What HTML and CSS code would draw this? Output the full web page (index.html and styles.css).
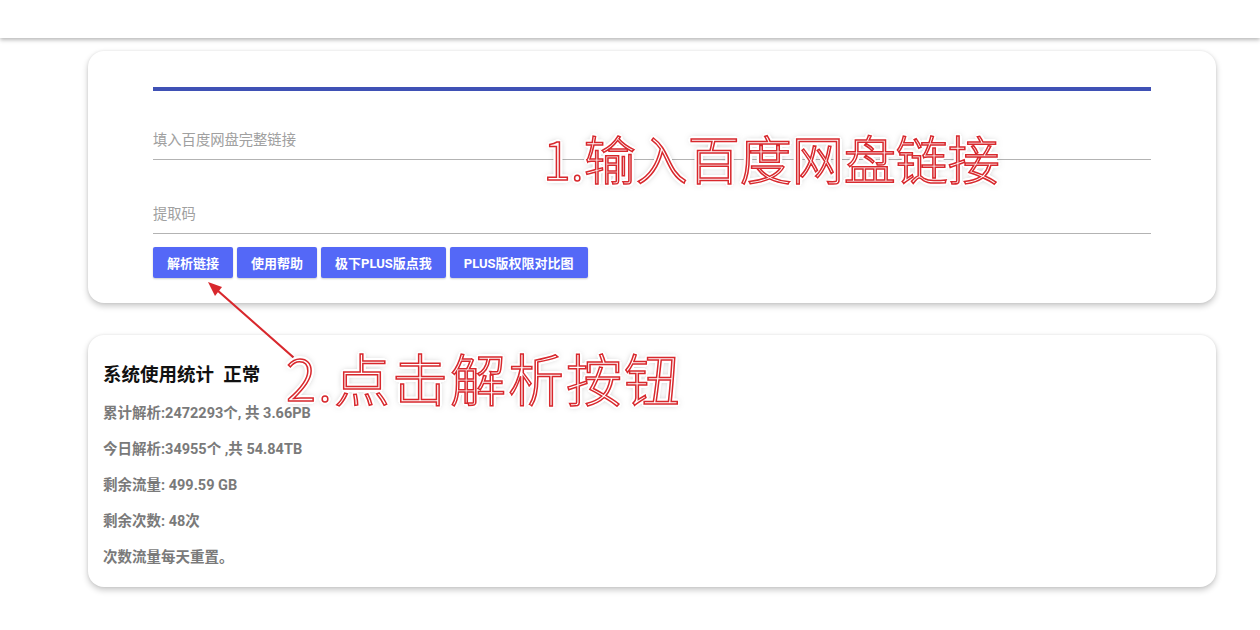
FILE: index.html
```html
<!DOCTYPE html>
<html lang="zh-CN">
<head>
<meta charset="utf-8">
<title>百度网盘解析</title>
<link rel="stylesheet" href="styles.css">
</head>
<body>
<header class="topbar"></header>
<main class="page">
  <section class="card form-card">
    <div class="accent-bar"></div>
    <input class="field field-link" type="text" placeholder="填入百度网盘完整链接">
    <input class="field field-code" type="text" placeholder="提取码">
    <div class="actions">
      <button class="btn">解析链接</button>
      <button class="btn">使用帮助</button>
      <button class="btn">极下PLUS版点我</button>
      <button class="btn">PLUS版权限对比图</button>
    </div>
  </section>
  <section class="card stats-card">
    <h3 class="stats-title">系统使用统计&nbsp;&nbsp;正常</h3>
    <p class="stat">累计解析:2472293个, 共 3.66PB</p>
    <p class="stat">今日解析:34955个 ,共 54.84TB</p>
    <p class="stat">剩余流量: 499.59 GB</p>
    <p class="stat">剩余次数: 48次</p>
    <p class="stat">次数流量每天重置。</p>
  </section>
</main>
<svg class="arrow" width="1260" height="630" viewBox="0 0 1260 630">
  <line x1="293" y1="357" x2="217" y2="290" stroke="#d8282d" stroke-width="2.2" stroke-linecap="round"/>
  <polygon points="208,282 215,296 222,287" fill="#d8282d"/>
</svg>
<div class="note note-1">1.输入百度网盘链接</div>
<div class="note note-2">2.点击解析按钮</div>
</body>
</html>
```

FILE: styles.css
```css
html, body {
  margin: 0;
  padding: 0;
  background: #ffffff;
}
body {
  position: relative;
  width: 1260px;
  height: 630px;
  overflow: hidden;
  font-family: Roboto, "Noto Sans CJK SC", sans-serif;
}
.topbar {
  height: 38px;
  background: #fff;
  box-shadow: 0 2px 4px rgba(0, 0, 0, 0.28);
}
.page {
  margin-left: 88px;
  width: 1128px;
  padding-top: 13px;
  display: flex;
  flex-direction: column;
  gap: 32px;
}
.card {
  background: #fff;
  border-radius: 16px;
  box-shadow: 0 3px 6px rgba(0, 0, 0, 0.22), 0 0 3px rgba(0, 0, 0, 0.08);
  box-sizing: border-box;
}
.form-card {
  padding: 36px 65px 25px;
  display: flex;
  flex-direction: column;
}
.accent-bar {
  height: 4px;
  background: #3f51b5;
}
.field {
  display: block;
  box-sizing: border-box;
  width: 100%;
  height: 30px;
  padding: 0 0 10px 0;
  border: none;
  border-bottom: 1px solid #b3b3b3;
  outline: none;
  font-family: Roboto, "Noto Sans CJK SC", sans-serif;
  font-size: 14.3px;
  color: #333;
  background: transparent;
}
.field::placeholder {
  color: #a0a0a0;
}
.field-link {
  margin-top: 39px;
}
.field-code {
  margin-top: 44px;
}
.actions {
  margin-top: 13px;
  display: flex;
  gap: 4px;
}
.btn {
  height: 31px;
  padding: 0 14px;
  border: none;
  border-radius: 2px;
  background: #5468f7;
  color: #fff;
  font-family: Roboto, "Noto Sans CJK SC", sans-serif;
  font-size: 13px;
  font-weight: bold;
  box-shadow: 0 1px 2px rgba(0, 0, 0, 0.2);
}
.stats-card {
  padding: 28px 15px 19px;
}
.stats-title {
  margin: 0 0 17px;
  font-size: 18.5px;
  line-height: 24px;
  font-weight: bold;
  color: #111;
}
.stat {
  margin: 0 0 16px;
  font-size: 14.5px;
  line-height: 20px;
  font-weight: bold;
  color: #7a7a7a;
}
.stat:last-child {
  margin-bottom: 0;
}
.arrow {
  position: absolute;
  left: 0;
  top: 0;
  pointer-events: none;
}
.note {
  position: absolute;
  font-family: "Noto Sans CJK SC", sans-serif;
  font-weight: 300;
  line-height: 1;
  white-space: nowrap;
  color: #fff;
  -webkit-text-stroke: 1.5px #d8282d;
  text-shadow:
    3px 0 0 #fff, -3px 0 0 #fff, 0 3px 0 #fff, 0 -3px 0 #fff,
    2px 2px 0 #fff, -2px 2px 0 #fff, 2px -2px 0 #fff, -2px -2px 0 #fff,
    0 0 6px rgba(0, 0, 0, 0.5);
}
.note-1 {
  left: 543px;
  top: 132px;
  font-size: 52px;
  letter-spacing: 0;
}
.note-2 {
  left: 286px;
  top: 349px;
  font-size: 56px;
  letter-spacing: 2px;
}
```
